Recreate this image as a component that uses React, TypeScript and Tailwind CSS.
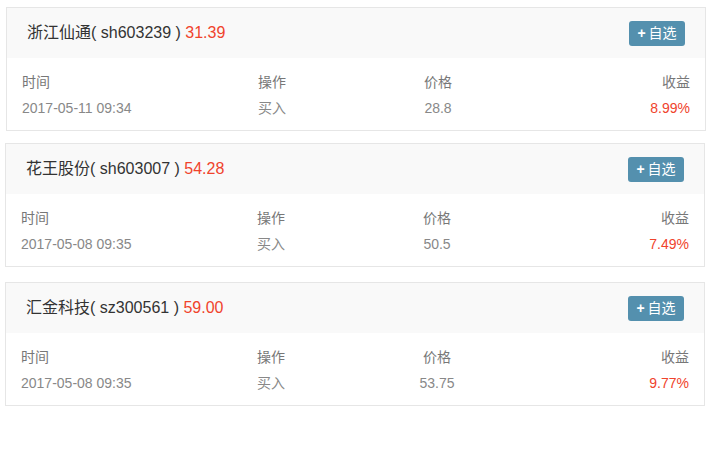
import React from "react";

type Trade = {
  name: string;
  code: string;
  price: string;
  time: string;
  action: string;
  cost: string;
  gain: string;
};

const trades: Trade[] = [
  { name: "浙江仙通", code: "sh603239", price: "31.39", time: "2017-05-11 09:34", action: "买入", cost: "28.8", gain: "8.99%" },
  { name: "花王股份", code: "sh603007", price: "54.28", time: "2017-05-08 09:35", action: "买入", cost: "50.5", gain: "7.49%" },
  { name: "汇金科技", code: "sz300561", price: "59.00", time: "2017-05-08 09:35", action: "买入", cost: "53.75", gain: "9.77%" },
];

const spacing = ["mt-[7px] ml-[6px]", "mt-[12px] ml-[5px]", "mt-[15px] ml-[5px]"];

function TradeCard({ t, cls }: { t: Trade; cls: string }) {
  return (
    <div className={`w-[700px] h-[124px] border border-[#e6e6e6] bg-white ${cls}`}>
      {/* header */}
      <div className="h-[50px] bg-[#f9f9f9] flex items-center justify-between pl-[20px] pr-[20px]">
        <div className="text-[16px] text-[#333]">
          {t.name}( {t.code} ) <span className="text-[#f0432c]">{t.price}</span>
        </div>
        <button className="h-[25px] w-[56px] rounded-[3px] bg-[#5490ae] text-white text-[14px] flex items-center justify-center gap-[3px]">
          <span className="font-bold">+</span>
          <span>自选</span>
        </button>
      </div>

      {/* body */}
      <div className="px-[15px] pt-[14px] text-[14px] leading-[20px]">
        <div className="grid grid-cols-[236px_120px_120px_1fr] text-[#777]">
          <div>时间</div>
          <div>操作</div>
          <div className="text-center">价格</div>
          <div className="text-right">收益</div>
        </div>
        <div className="grid grid-cols-[236px_120px_120px_1fr] mt-[6px] text-[#888]">
          <div>{t.time}</div>
          <div>{t.action}</div>
          <div className="text-center">{t.cost}</div>
          <div className="text-right text-[#f0432c]">{t.gain}</div>
        </div>
      </div>
    </div>
  );
}

export default function App() {
  return (
    <div
      className="w-[712px] h-[460px] bg-white overflow-hidden flex flex-col"
      style={{ fontFamily: '"Liberation Sans", "Noto Sans CJK SC", sans-serif' }}
    >
      {trades.map((t, i) => (
        <TradeCard key={t.code} t={t} cls={spacing[i]} />
      ))}
    </div>
  );
}
